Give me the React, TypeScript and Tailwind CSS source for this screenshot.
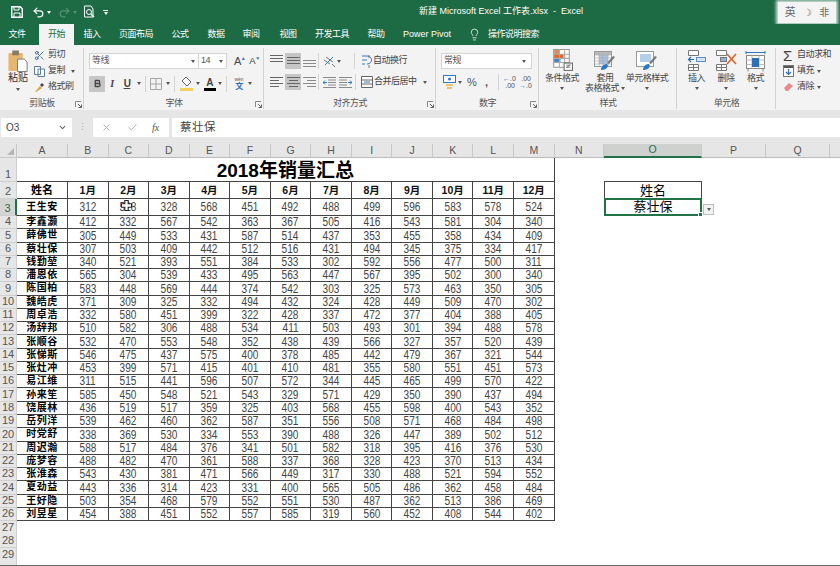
import { ReactNode } from "react"
import { Undo2, Redo2, Scissors, Lightbulb, X, Check, ChevronDown, Bold } from "lucide-react"

const months = ["1月", "2月", "3月", "4月", "5月", "6月", "7月", "8月", "9月", "10月", "11月", "12月"]
// last column runs off the window, so its letter is not visible
const letters = ["A", "B", "C", "D", "E", "F", "G", "H", "I", "J", "K", "L", "M", "N", "O", "P", "Q", ""]

const rows: [string, number[]][] = [
  ["王生安", [312, 528, 328, 568, 451, 492, 488, 499, 596, 583, 578, 524]],
  ["李鑫灏", [412, 332, 567, 542, 363, 367, 505, 416, 543, 581, 304, 340]],
  ["薛佛世", [305, 449, 533, 431, 587, 514, 437, 353, 455, 358, 434, 409]],
  ["蔡壮保", [307, 503, 409, 442, 512, 516, 431, 494, 345, 375, 334, 417]],
  ["钱勤堃", [340, 521, 393, 551, 384, 533, 302, 592, 556, 477, 500, 311]],
  ["潘恩依", [565, 304, 539, 433, 495, 563, 447, 567, 395, 502, 300, 340]],
  ["陈国柏", [583, 448, 569, 444, 374, 542, 303, 325, 573, 463, 350, 305]],
  ["魏皓虎", [371, 309, 325, 332, 494, 432, 324, 428, 449, 509, 470, 302]],
  ["周卓浩", [332, 580, 451, 399, 322, 428, 337, 472, 377, 404, 388, 405]],
  ["汤辞邦", [510, 582, 306, 488, 534, 411, 503, 493, 301, 394, 488, 578]],
  ["张顺谷", [532, 470, 553, 548, 352, 438, 439, 566, 327, 357, 520, 439]],
  ["张悌斯", [546, 475, 437, 575, 400, 378, 485, 442, 479, 367, 321, 544]],
  ["张灶冲", [453, 399, 571, 415, 401, 410, 481, 355, 580, 551, 451, 573]],
  ["易江维", [311, 515, 441, 596, 507, 572, 344, 445, 465, 499, 570, 422]],
  ["孙来笙", [585, 450, 548, 521, 543, 329, 571, 429, 350, 390, 437, 494]],
  ["饶展林", [436, 519, 517, 359, 325, 403, 568, 455, 598, 400, 543, 352]],
  ["岳列洋", [539, 462, 460, 362, 587, 351, 556, 508, 571, 468, 484, 498]],
  ["时党舒", [338, 369, 530, 334, 553, 390, 488, 326, 447, 389, 502, 512]],
  ["周迟瀚", [588, 517, 484, 376, 341, 501, 582, 318, 395, 416, 376, 530]],
  ["庞梦容", [488, 482, 470, 361, 588, 337, 368, 328, 423, 370, 513, 434]],
  ["张淮森", [543, 430, 381, 471, 566, 449, 317, 330, 488, 521, 594, 552]],
  ["夏劲益", [443, 336, 314, 423, 331, 400, 565, 505, 486, 362, 458, 484]],
  ["王好隐", [503, 354, 468, 579, 552, 551, 530, 487, 362, 513, 386, 469]],
  ["刘昱星", [454, 388, 451, 552, 557, 585, 319, 560, 452, 408, 544, 402]],
]

function Caret({ className = "" }: { className?: string }) {
  return <span className={`inline-block shrink-0 w-0 h-0 border-x-[2.5px] border-x-transparent border-t-[3px] border-t-[#555] ${className}`} />
}

function Sep({ className = "mx-[4px]" }: { className?: string }) {
  return <div className={`w-px h-[16px] bg-[#d4d4d4] shrink-0 ${className}`} />
}

function Lines({ kind, dim }: { kind: "top" | "mid" | "bot" | "left" | "center" | "right"; dim?: boolean }) {
  const sets: Record<string, [number, number, number][]> = {
    top: [[1, 2, 13], [1, 5, 13], [1, 8, 13]],
    mid: [[1, 4, 13], [1, 7, 13], [1, 10, 13]],
    bot: [[1, 7, 13], [1, 10, 13], [1, 13, 13]],
    left: [[1, 3, 13], [1, 6, 9], [1, 9, 13], [1, 12, 9]],
    center: [[1, 3, 13], [3, 6, 9], [1, 9, 13], [3, 12, 9]],
    right: [[1, 3, 13], [5, 6, 9], [1, 9, 13], [5, 12, 9]],
  }
  return (
    <svg width="15" height="16" viewBox="0 0 15 16" className="shrink-0">
      {sets[kind].map(([x, y, w]) => (
        <rect key={y} x={x} y={y} width={w} height="1" fill={dim ? "#8a8a8a" : "#666"} />
      ))}
    </svg>
  )
}

function Launcher() {
  return (
    <svg width="7" height="7" viewBox="0 0 7 7" className="shrink-0">
      <path d="M0.5 6V0.5H6" fill="none" stroke="#888" />
      <path d="M3 3L6.5 6.5M6.5 3.5V6.5H3.5" fill="none" stroke="#666" />
    </svg>
  )
}

function Group({ width, label, children }: { width: string; label: string; children: ReactNode }) {
  return (
    <div className={`${width} shrink-0 h-full flex flex-col relative`}>
      <div className="flex-1 min-h-0">{children}</div>
      <div className="h-[12px] flex items-center justify-center text-[#555]">{label}</div>
      <div className="absolute right-[2px] bottom-[2px]">
        {label !== "样式" && label !== "单元格" && <Launcher />}
      </div>
      <div className="absolute right-0 top-[2px] bottom-[1px] w-px bg-[#d2d2d2]" />
    </div>
  )
}

function GridIcon({ tone }: { tone: "cond" | "table" | "cellstyle" }) {
  if (tone === "cond") {
    return (
      <svg width="24" height="24" viewBox="0 0 23 23">
        <rect x="3.5" y="0.5" width="15" height="17" fill="#fff" stroke="#999" />
        <rect x="4" y="1" width="5" height="4" fill="#d98a5f" />
        <rect x="4" y="5" width="9" height="4" fill="#e0662c" />
        <rect x="4" y="9" width="6" height="4" fill="#4a7fc0" />
        <path d="M3.5 5h15M3.5 9h15M3.5 13h15M9 .5v17M14 .5v17" stroke="#aaa" fill="none" />
        <rect x="13.5" y="13.5" width="8" height="7" fill="#fff" stroke="#666" />
        <path d="M15.5 18l4-3M15.5 15.5h4M15.5 17.5h4" stroke="#555" fill="none" strokeWidth=".7" />
      </svg>
    )
  }
  if (tone === "table") {
    return (
      <svg width="24" height="23" viewBox="0 0 24 23">
        <rect x="1.5" y="1.5" width="17" height="15" fill="#fff" stroke="#999" />
        <rect x="2" y="2" width="16" height="3" fill="#bcbcbc" />
        <rect x="6" y="5" width="9" height="9" fill="#a9c3e2" />
        <path d="M1.5 5h17M1.5 8h17M1.5 11h17M1.5 14h17M6 1.5v15M10 1.5v15M15 1.5v15" stroke="#aaa" fill="none" strokeWidth=".7" />
        <path d="M22 7l-6 7-2-1 6-7z" fill="#777" />
        <path d="M8 20c0-4 3-6 6-6l1 2c-1 3-4 4-7 4z" fill="#2f78c4" />
      </svg>
    )
  }
  return (
    <svg width="24" height="23" viewBox="0 0 24 23">
      <rect x="1.5" y="1.5" width="17" height="15" fill="#fff" stroke="#999" />
      <rect x="5" y="4" width="11" height="8" fill="#b5cee9" />
      <path d="M22 7l-6 7-2-1 6-7z" fill="#777" />
      <path d="M8 20c0-4 3-6 6-6l1 2c-1 3-4 4-7 4z" fill="#2f78c4" />
    </svg>
  )
}

function CellIcon({ kind }: { kind: "insert" | "delete" | "format" }) {
  if (kind === "insert") {
    return (
      <svg width="20" height="22" viewBox="0 0 20 22">
        <path d="M1.5 .5h10v5h-10zM1.5 14.5h10v6h-10zM6.5 14.5v6M1.5 17.5h10" fill="#fff" stroke="#777" />
        <rect x="9.5" y="7.5" width="9" height="4" fill="#d5e3f2" stroke="#5b8fc7" />
        <path d="M7 9.5H1.5M4 7L1.5 9.5 4 12" fill="none" stroke="#1f6fb8" strokeWidth="1.2" />
      </svg>
    )
  }
  if (kind === "delete") {
    return (
      <svg width="22" height="22" viewBox="0 0 22 22">
        <path d="M1.5 .5h10v5h-10zM1.5 14.5h10v6h-10zM6.5 14.5v6M1.5 17.5h10" fill="#fff" stroke="#777" />
        <rect x="5.5" y="7.5" width="6" height="4" fill="#8fb2d8" stroke="#777" />
        <path d="M12 4l9 10M21 4l-9 10" stroke="#e0622a" strokeWidth="1.6" />
      </svg>
    )
  }
  return (
    <svg width="21" height="22" viewBox="0 0 21 22">
      <path d="M1 2.5h19M1 1v3M20 1v3" stroke="#2f78c4" fill="none" />
      <rect x="1.5" y="5.5" width="18" height="13" fill="#fff" stroke="#888" />
      <path d="M7 5.5v13M14 5.5v13M1.5 10h18M1.5 14.5h18" stroke="#bbb" fill="none" />
      <rect x="7" y="8" width="7" height="9" fill="#2f6fb5" />
      <path d="M3 18.5v3M18 18.5v3" stroke="#888" />
    </svg>
  )
}

function Clipboard() {
  return (
    <div className="flex">
      <div className="w-[34px] flex flex-col items-center pl-[2px] pt-[4px]">
        <svg width="22" height="23" viewBox="0 0 22 24">
          <rect x="1" y="3" width="15" height="19" rx="1" fill="#e5b670" />
          <rect x="5" y="0.5" width="7" height="5" fill="#8a7a63" />
          <path d="M10.5 9.5h7l3 3v10h-10z" fill="#fff" stroke="#777" />
        </svg>
        <span className="text-[10px] leading-[10px] tracking-normal text-[#333]">粘贴</span>
        <Caret className="mt-[5px]" />
      </div>
      <div className="flex flex-col text-[#444] pt-px">
        <div className="h-[16px] flex items-center gap-[3px]">
          <Scissors size={11} className="text-[#3b6fa8]" />
          <span>剪切</span>
        </div>
        <div className="h-[16px] flex items-center gap-[3px]">
          <svg width="11" height="11" viewBox="0 0 11 11">
            <path d="M.5 .5h6v8h-6zM4 3h6.5v7.5H4z" fill="#fff" stroke="#5d7ea3" />
          </svg>
          <span>复制</span>
          <Caret className="ml-[3px]" />
        </div>
        <div className="h-[16px] flex items-center gap-[3px]">
          <svg width="11" height="11" viewBox="0 0 11 11">
            <path d="M1 10L6 4l2 2-6 4z" fill="#d9a13c" />
            <path d="M6 3l2-2 2 2-2 2z" fill="#444" />
          </svg>
          <span>格式刷</span>
        </div>
      </div>
    </div>
  )
}

function FontGroup() {
  return (
    <div className="pl-[5px] pt-[7px] flex flex-col">
      <div className="flex items-center h-[16px]">
        <div className="w-[110px] h-full bg-white border border-[#d4d4d4] flex items-center justify-between px-[2px] text-[#555]">
          <span>等线</span>
          <Caret className="mr-[1px]" />
        </div>
        <div className="w-[28px] h-full bg-white border border-l-0 border-[#d4d4d4] flex items-center justify-between px-[2px] text-[#555]">
          <span>14</span>
          <Caret className="mr-[1px]" />
        </div>
        <span className="ml-[7px] text-[11px] leading-none text-[#444]">A<span className="align-top text-[#2f78c4] text-[5px]">▲</span></span>
        <span className="ml-[4px] text-[9.5px] leading-none text-[#444]">A<span className="align-top text-[#2f78c4] text-[5px]">▼</span></span>
      </div>
      <div className="flex items-center h-[17px] mt-[6px] text-[#444]">
        <div className="w-[16px] h-[16px] shrink-0 bg-[#c6c6c6] flex items-center justify-center">
          <Bold size={9} strokeWidth={3.5} />
        </div>
        <span className="w-[14px] shrink-0 text-center font-['Liberation_Serif',serif] italic font-bold text-[10px]">I</span>
        <span className="w-[16px] shrink-0 text-center underline font-bold text-[10px]">U</span>
        <Caret className="ml-[2px]" />
        <Sep />
        <svg width="12" height="12" viewBox="0 0 12 12" className="shrink-0">
          <path d="M.5 .5h11v11H.5zM6 .5v11M.5 6h11" fill="none" stroke="#a5a5a5" />
        </svg>
        <Caret className="ml-[4px]" />
        <Sep />
        <svg width="14" height="15" viewBox="0 0 14 15" className="ml-[1px] shrink-0">
          <path d="M6 1l5 5-4 4-5-5z" fill="#fff" stroke="#666" />
          <rect x="0" y="12" width="13" height="3" fill="#f2d25c" />
        </svg>
        <Caret className="ml-[2px]" />
        <div className="ml-[3px] flex flex-col items-center w-[13px] shrink-0">
          <span className="text-[10px] leading-[11px] font-bold">A</span>
          <span className="w-[12px] h-[3px] bg-black" />
        </div>
        <Caret className="ml-[2px]" />
        <Sep />
        <div className="flex flex-col items-center w-[14px] ml-[1px] shrink-0">
          <span className="text-[5px] leading-[6px] tracking-normal text-[#555]">wén</span>
          <span className="text-[8px] leading-[9px] text-[#2f6fb5] font-bold">文</span>
        </div>
        <Caret className="ml-[2px]" />
      </div>
    </div>
  )
}

function AlignGroup() {
  return (
    <div className="pl-[4px] pt-[7px] flex flex-col whitespace-nowrap">
      <div className="flex items-center h-[16px]">
        <div className="w-[17px] shrink-0 flex justify-center"><Lines kind="top" /></div>
        <div className="w-[16px] shrink-0 h-[16px] flex justify-center bg-[#c6c6c6]"><Lines kind="mid" /></div>
        <div className="w-[17px] shrink-0 flex justify-center"><Lines kind="bot" dim /></div>
        <Sep className="" />
        <svg width="13" height="13" viewBox="0 0 13 13" className="ml-[4px] shrink-0">
          <path d="M1 5l6 4M3 2l7 5M9 9l3 3" stroke="#777" fill="none" />
          <path d="M2 10l8-8" stroke="#2f78c4" fill="none" />
        </svg>
        <Caret className="ml-[1px]" />
        <div className="w-[13px] shrink-0" />
        <Sep className="" />
        <svg width="12" height="14" viewBox="0 0 12 14" className="ml-[6px] shrink-0">
          <path d="M1 2h5M1 6h5M1 10h3M6 2c6 0 6 8 0 8" stroke="#3a79bb" fill="none" />
          <path d="M8 1v3M8 11v3" stroke="#777" />
        </svg>
        <span className="text-[#444]">自动换行</span>
      </div>
      <div className="flex items-center h-[16px] mt-[5px]">
        <div className="w-[17px] shrink-0 flex justify-center"><Lines kind="left" /></div>
        <div className="w-[16px] shrink-0 h-[16px] flex justify-center bg-[#c6c6c6]"><Lines kind="center" /></div>
        <div className="w-[17px] shrink-0 flex justify-center"><Lines kind="right" dim /></div>
        <Sep className="" />
        <svg width="13" height="11" viewBox="0 0 13 11" className="ml-[4px] shrink-0">
          <path d="M0 .5h13M0 10.5h13M5 3h8M5 5.5h8M5 8h8" stroke="#8a8a8a" />
          <path d="M4 5.5H0M2 3.5l-2 2 2 2" stroke="#2f78c4" fill="none" />
        </svg>
        <svg width="13" height="11" viewBox="0 0 13 11" className="ml-[3px] shrink-0">
          <path d="M0 .5h13M0 10.5h13M0 3h8M0 5.5h8M0 8h8" stroke="#8a8a8a" />
          <path d="M9 5.5h4M11 3.5l2 2-2 2" stroke="#2f78c4" fill="none" />
        </svg>
        <div className="w-[3px] shrink-0" />
        <Sep className="" />
        <svg width="12" height="12" viewBox="0 0 12 12" className="ml-[5px] shrink-0">
          <path d="M.5 .5h11v11H.5zM.5 4h11M.5 8h11" fill="#fff" stroke="#666" />
          <path d="M3 6h6" stroke="#2f78c4" />
        </svg>
        <span className="ml-[1px] text-[#444]">合并后居中</span>
        <Caret className="ml-[6px]" />
      </div>
    </div>
  )
}

function NumberGroup() {
  return (
    <div className="pl-[5px] pt-[7px] flex flex-col">
      <div className="w-[91px] h-[16px] bg-white border border-[#d4d4d4] flex items-center justify-between px-[2px] text-[#555]">
        <span>常规</span>
        <Caret className="mr-[3px]" />
      </div>
      <div className="flex items-center h-[16px] mt-[5px] text-[#555]">
        <svg width="13" height="14" viewBox="0 0 13 14" className="ml-[2px] shrink-0">
          <rect x=".5" y=".5" width="12" height="7" fill="#fff" stroke="#2f78c4" />
          <circle cx="6.5" cy="4" r="1.5" fill="#2f78c4" />
          <path d="M3 10h7M4 13h5" stroke="#e3b34f" strokeWidth="1.5" />
        </svg>
        <Caret className="ml-[2px]" />
        <span className="ml-[5px] text-[11px] tracking-normal w-[11px] shrink-0">%</span>
        <span className="ml-[7px] text-[11px] font-bold w-[4px] shrink-0">,</span>
        <div className="w-[5px] shrink-0" />
        <Sep />
        <div className="w-[12px] shrink-0 text-[7px] leading-[7px] tracking-normal text-[#555] text-right"><span className="text-[#2f78c4]">←</span>.0<br />.00</div>
        <div className="w-[12px] shrink-0 ml-[4px] text-[7px] leading-[7px] tracking-normal text-[#555] text-right">.00<br /><span className="text-[#2f78c4]">→</span>.0</div>
      </div>
    </div>
  )
}

function BigButton({ width, icon, lines }: { width: string; icon: ReactNode; lines: string[] }) {
  return (
    <div className={`${width} shrink-0 flex flex-col items-center pt-[3px] leading-[10px] text-[#444]`}>
      <div className="h-[24px] flex items-center">{icon}</div>
      <span className="whitespace-nowrap">{lines[0]}</span>
      {lines[1] ? (
        <span className="whitespace-nowrap flex items-center gap-[2px]">
          {lines[1]}
          <Caret />
        </span>
      ) : (
        <Caret className="mt-[4px]" />
      )}
    </div>
  )
}

function Editing() {
  return (
    <div className="pl-[7px] pt-px flex flex-col text-[#444] whitespace-nowrap">
      <div className="h-[16px] flex items-center gap-[3px]">
        <span className="text-[15px] leading-none w-[11px] text-[#444]">Σ</span>
        <span>自动求和</span>
        <Caret className="ml-[6px]" />
      </div>
      <div className="h-[16px] flex items-center gap-[3px]">
        <svg width="11" height="12" viewBox="0 0 11 12">
          <rect x=".5" y=".5" width="10" height="11" fill="#fff" stroke="#777" />
          <rect x="1" y="1" width="9" height="2" fill="#555" />
          <path d="M5.5 4v5M3 7l2.5 2.5L8 7" stroke="#2f6fb5" fill="none" strokeWidth="1.2" />
        </svg>
        <span>填充</span>
        <Caret />
      </div>
      <div className="h-[16px] flex items-center gap-[3px]">
        <svg width="11" height="10" viewBox="0 0 11 10">
          <path d="M1 6l5-5 4 3-5 5H3z" fill="#e98a8e" />
        </svg>
        <span>清除</span>
        <Caret />
      </div>
    </div>
  )
}

const rowHead = "bg-[#e6e6e6] text-[#555] flex items-end justify-center border-r border-b border-[#cfcfcf] text-[11px] leading-[13px]"
const boxed = "border-r border-b border-[#444] flex justify-center"

function Sheet() {
  const head = "bg-[#e6e6e6] text-[#555] flex items-center justify-center border-r border-[#c8c8c8]"
  return (
    <div className="relative grid grid-cols-[17px_51px_repeat(12,40.56px)_49.5px_98px_64px_64px_64px] grid-rows-[14px_24px_17px_17px_repeat(26,13.28px)_1fr] h-[422px] overflow-hidden bg-white">
      <div className="bg-[#e6e6e6] border-r border-b border-[#c8c8c8] flex items-end justify-end p-[2px]">
        <span className="w-0 h-0 border-l-[7px] border-l-transparent border-b-[7px] border-b-[#b5b5b5]" />
      </div>
      {letters.map((l) => (
        <div
          key={l}
          className={`text-[10.5px] border-b ${head} ${l === "O" ? "!bg-[#cfd1cf] !text-[#2f6b4a] border-b-2 !border-b-[#217346]" : "border-b-[#bbb]"}`}
        >
          {l}
        </div>
      ))}

      <div className={rowHead}>1</div>
      <div className="col-span-13 border-r border-b border-[#444] flex items-end justify-center text-[19px] leading-[21px] font-bold text-black">
        2018年销量汇总
      </div>
      <div />
      <div className="border-b border-[#444]" />
      <div /><div /><div />

      <div className={rowHead}>2</div>
      <div className={`${boxed} items-center font-bold text-[11px] leading-[15px] text-black`}>姓名</div>
      {months.map((m) => (
        <div key={m} className={`${boxed} items-center font-bold text-[10.5px] leading-[15px] text-[#111]`}>{m}</div>
      ))}
      <div />
      <div className="border-l border-r border-b border-[#444] flex items-center justify-center text-[13px] leading-[15px] text-black">姓名</div>
      <div /><div /><div />

      {rows.map(([name, vals], i) => (
        <Row key={name} index={i} name={name} vals={vals} />
      ))}

      {[27, 28, 29].map((n) => (
        <div key={n} className="col-span-full grid grid-cols-[17px_1fr]">
          <div className={rowHead}>{n}</div>
          <div />
        </div>
      ))}
      <div className="col-span-full grid grid-cols-[17px_1fr] border-b border-[#666]">
        <div className="bg-[#e6e6e6] border-r border-[#cfcfcf]" />
        <div />
      </div>

      {/* mouse cursor over C3 */}
      <svg width="11" height="11" viewBox="0 0 13 13" className="absolute left-[121px] top-[56px]">
        <path d="M4.5 .5h4v4h4v4h-4v4h-4v-4h-4v-4h4z" fill="#fff" stroke="#222" strokeWidth="1.3" />
      </svg>
    </div>
  )
}

function Row({ index, name, vals }: { index: number; name: string; vals: number[] }) {
  const selected = index === 0
  return (
    <>
      <div className={`${rowHead} ${selected ? "!bg-[#d3d5d3] !text-[#2f6b4a] border-r-2 !border-r-[#217346]" : ""}`}>{index + 3}</div>
      <div className={`${boxed} items-center font-bold text-[10px] leading-[12px] tracking-[0.5px] text-black`}>{name}</div>
      {vals.map((v, j) => (
        <div key={j} className={`${boxed} text-[#444] ${selected ? "items-center leading-[13px]" : "items-end leading-[11px]"}`}>
          <span className="inline-block text-[12px] scale-x-[0.84]">{v}</span>
        </div>
      ))}
      <div />
      {selected ? (
        <div className="relative border-2 border-[#217346] flex items-center justify-center text-[13px] leading-[14px] text-black -mt-px">
          蔡壮保
          <span className="absolute right-[-3px] bottom-[-3px] w-[5px] h-[5px] bg-[#217346] border border-white" />
        </div>
      ) : (
        <div />
      )}
      {selected ? (
        <div className="pl-px pt-[5px]">
          <div className="w-[11px] h-[11px] bg-[#f2f2f2] border border-[#bdbdbd] flex items-center justify-center">
            <Caret />
          </div>
        </div>
      ) : (
        <div />
      )}
      <div /><div />
    </>
  )
}

export default function App() {
  return (
    <div className="w-[840px] h-[566px] overflow-hidden flex flex-col bg-[#e6e6e6] font-['Liberation_Sans','Noto_Sans_CJK_SC',sans-serif]">
      {/* title bar */}
      <div className="h-[24px] bg-[#1c6b45] flex items-center text-white shrink-0">
        <svg width="12" height="12" viewBox="0 0 12 12" className="ml-[11px]">
          <path d="M.75 .75h8.5l2 2v8.5h-10.5z" fill="none" stroke="#fff" strokeWidth="1.4" />
          <path d="M3 1v3h5V1M3 11V7h6v4" fill="none" stroke="#fff" />
        </svg>
        <Undo2 size={13} strokeWidth={2.2} className="ml-[9px]" />
        <Caret className="ml-[2px] !border-t-white" />
        <Redo2 size={13} className="ml-[7px] text-[#5d9178]" />
        <Caret className="ml-[2px] !border-t-[#5d9178]" />
        <svg width="13" height="14" viewBox="0 0 13 14" className="ml-[6px]">
          <path d="M8 1H1.5v11H10V4z" fill="none" stroke="#fff" />
          <circle cx="6" cy="7" r="2.5" fill="none" stroke="#fff" />
          <path d="M8 9l3 3" stroke="#fff" strokeWidth="1.4" />
        </svg>
        <div className="ml-[7px] flex flex-col items-center gap-[1px]">
          <span className="w-[5px] h-px bg-white" />
          <Caret className="!border-t-white" />
        </div>
        <span className="ml-[311px] text-[9px] whitespace-nowrap">新建 Microsoft Excel 工作表.xlsx&nbsp;&nbsp;-&nbsp;&nbsp;Excel</span>
        <div className="ml-auto mr-[4px] w-[58px] h-[21px] bg-[#f4f4f4] shadow-[0_0_3px_2px_rgba(255,255,255,0.8)] flex items-center justify-around px-[3px] text-[11px] text-[#666]">
          <span>英</span>
          <span className="text-[10px]">☽</span>
          <span className="text-[10px]">非</span>
        </div>
      </div>

      {/* tabs */}
      <div className="h-[21px] bg-[#1c6b45] flex items-end text-[9px] tracking-[-0.5px] text-white shrink-0">
        <div className="w-[34px] h-full flex items-center justify-center">文件</div>
        <div className="ml-[5px] w-[35px] h-full bg-[#f3f3f3] text-[#217346] flex items-center justify-center">开始</div>
        <div className="w-[36px] h-full flex items-center justify-center">插入</div>
        <div className="w-[52px] h-full flex items-center justify-center">页面布局</div>
        <div className="w-[36px] h-full flex items-center justify-center">公式</div>
        <div className="w-[36px] h-full flex items-center justify-center">数据</div>
        <div className="w-[34px] h-full flex items-center justify-center">审阅</div>
        <div className="w-[40px] h-full flex items-center justify-center">视图</div>
        <div className="w-[48px] h-full flex items-center justify-center">开发工具</div>
        <div className="w-[40px] h-full flex items-center justify-center">帮助</div>
        <div className="w-[62px] h-full flex items-center justify-center tracking-normal">Power Pivot</div>
        <div className="ml-[10px] h-full flex items-center gap-[7px]">
          <Lightbulb size={13} strokeWidth={1.4} />
          <span>操作说明搜索</span>
        </div>
      </div>

      {/* ribbon */}
      <div className="h-[65px] bg-[#f3f3f3] flex shrink-0 pt-px text-[9px] tracking-[-0.5px]">
        <Group width="w-[84px]" label="剪贴板"><Clipboard /></Group>
        <Group width="w-[180px]" label="字体"><FontGroup /></Group>
        <Group width="w-[172px]" label="对齐方式"><AlignGroup /></Group>
        <Group width="w-[103px]" label="数字"><NumberGroup /></Group>
        <Group width="w-[138px]" label="样式">
          <div className="flex">
            <BigButton width="w-[46px]" icon={<GridIcon tone="cond" />} lines={["条件格式"]} />
            <BigButton width="w-[40px]" icon={<GridIcon tone="table" />} lines={["套用", "表格格式"]} />
            <BigButton width="w-[44px]" icon={<GridIcon tone="cellstyle" />} lines={["单元格样式"]} />
          </div>
        </Group>
        <Group width="w-[99px]" label="单元格">
          <div className="flex pl-[5px]">
            <BigButton width="w-[29px]" icon={<CellIcon kind="insert" />} lines={["插入"]} />
            <BigButton width="w-[30px]" icon={<CellIcon kind="delete" />} lines={["删除"]} />
            <BigButton width="w-[29px]" icon={<CellIcon kind="format" />} lines={["格式"]} />
          </div>
        </Group>
        <Editing />
      </div>

      {/* formula bar */}
      <div className="h-[8px] shrink-0" />
      <div className="h-[19px] flex shrink-0 bg-[#e6e6e6]">
        <div className="w-[71px] ml-px bg-white flex items-center justify-between px-[5px] text-[10px] text-[#444]">
          <span>O3</span>
          <ChevronDown size={9} strokeWidth={3} className="text-[#666]" />
        </div>
        <div className="w-[21px] flex items-center justify-center text-[9px] text-[#aaa]">⋮</div>
        <div className="w-[76px] bg-white flex items-center text-[#aaa]">
          <X size={11} className="ml-[8px]" />
          <Check size={11} className="ml-[15px]" />
          <span className="ml-[14px] font-['Liberation_Serif',serif] italic text-[10px] text-[#555]">fx</span>
        </div>
        <div className="ml-[3px] flex-1 bg-white flex items-center pl-[8px] text-[11.5px] tracking-[0.5px] text-[#444]">蔡壮保</div>
      </div>
      <div className="h-[7px] shrink-0" />

      <Sheet />
    </div>
  )
}
